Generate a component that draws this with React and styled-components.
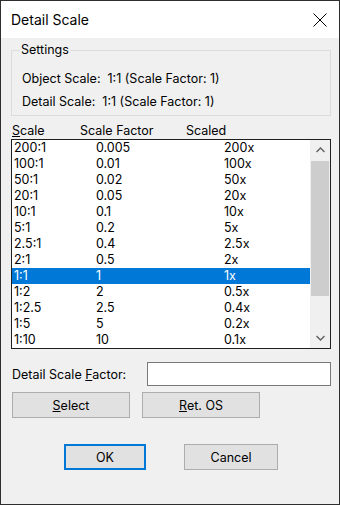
import React, { useState } from 'react';
import styled, { createGlobalStyle } from 'styled-components';

const GlobalStyle = createGlobalStyle`
  html, body {
    margin: 0;
    padding: 0;
    background: #f0f0f0;
  }
  body {
    font-family: Inter, 'Noto Sans', 'Liberation Sans', Arial, sans-serif;
    font-size: 12.5px;
    color: #000;
  }
`;

// Ventana del dialogo
const Window = styled.div`
  width: 340px;
  height: 505px;
  box-sizing: border-box;
  border: 1px solid #2e2e2e;
  background: #f0f0f0;
  display: flex;
  flex-direction: column;
`;

const TitleBar = styled.div`
  height: 37px;
  background: #fff;
  display: flex;
  align-items: center;
  justify-content: space-between;
  padding: 0 0 0 10px;
`;

const Title = styled.span`
  font-size: 14px;
  color: #000;
`;

const CloseButton = styled.div`
  width: 46px;
  height: 37px;
  display: flex;
  align-items: center;
  justify-content: center;
  margin-right: -4px;
`;

const Body = styled.div`
  display: flex;
  flex-direction: column;
  padding: 0 8px 0 10px;
`;

const GroupBox = styled.fieldset`
  margin: 4px 0 0 0;
  padding: 0 9px 5px 10px;
  border: 1px solid #dcdcdc;
  min-width: 0;
`;

const Legend = styled.legend`
  padding: 0 1px;
  margin-left: -2px;
  line-height: 16px;
`;

const InfoLine = styled.div`
  line-height: 16px;
  margin-top: ${(p) => p.$top}px;
  white-space: pre;
`;

const HeaderRow = styled.div`
  display: grid;
  grid-template-columns: 68px 106px 1fr;
  line-height: 16px;
  margin-top: 7px;
  padding-left: 1px;
`;

const U = styled.span`
  text-decoration: underline;
  text-underline-offset: 1px;
`;

const ListBox = styled.div`
  display: flex;
  height: 210px;
  box-sizing: border-box;
  border: 1px solid #1f1f1f;
  background: #fff;
  overflow: hidden;
`;

const Rows = styled.div`
  flex: 1;
  display: flex;
  flex-direction: column;
`;

const Row = styled.div`
  display: grid;
  grid-template-columns: 82px 128px 1fr;
  height: 16px;
  line-height: 16px;
  flex-shrink: 0;
  padding-left: 2px;
  background: ${(p) => (p.$selected ? '#0078d7' : 'transparent')};
  color: ${(p) => (p.$selected ? '#fff' : '#000')};
  cursor: default;
`;

const ScrollBar = styled.div`
  width: 20px;
  background: #f0f0f0;
  display: flex;
  flex-direction: column;
`;

const ArrowBox = styled.div`
  height: 20px;
  display: flex;
  align-items: center;
  justify-content: center;
`;

const Track = styled.div`
  flex: 1;
  display: flex;
  flex-direction: column;
`;

const Thumb = styled.div`
  height: 135px;
  margin: 1px 1px 0 1px;
  background: #cdcdcd;
`;

const FactorRow = styled.div`
  display: flex;
  align-items: center;
  justify-content: space-between;
  margin-top: 13px;
  padding-left: 1px;
`;

const TextInput = styled.input`
  width: 184px;
  height: 24px;
  box-sizing: border-box;
  border: 1px solid #7a7a7a;
  background: #fff;
  outline: none;
  font: inherit;
  padding: 0 4px;
`;

const ButtonRow = styled.div`
  display: flex;
  gap: ${(p) => p.$gap}px;
  margin-top: ${(p) => p.$top}px;
  padding-left: ${(p) => p.$left}px;
`;

const Button = styled.button`
  width: ${(p) => p.$w}px;
  height: 26px;
  box-sizing: border-box;
  background: #e1e1e1;
  border: ${(p) => (p.$default ? '2px solid #0078d7' : '1px solid #adadad')};
  font-family: inherit;
  font-size: 12.5px;
  color: #000;
  padding: 0;
  cursor: default;
`;

const scales = [
  ['200:1', '0.005', '200x'],
  ['100:1', '0.01', '100x'],
  ['50:1', '0.02', '50x'],
  ['20:1', '0.05', '20x'],
  ['10:1', '0.1', '10x'],
  ['5:1', '0.2', '5x'],
  ['2.5:1', '0.4', '2.5x'],
  ['2:1', '0.5', '2x'],
  ['1:1', '1', '1x'],
  ['1:2', '2', '0.5x'],
  ['1:2.5', '2.5', '0.4x'],
  ['1:5', '5', '0.2x'],
  ['1:10', '10', '0.1x'],
];

const Chevron = ({ up }) => (
  <svg width="9" height="6" viewBox="0 0 9 6">
    <polyline
      points={up ? '0.5,5 4.5,1 8.5,5' : '0.5,1 4.5,5 8.5,1'}
      fill="none"
      stroke="#606060"
      strokeWidth="1.4"
    />
  </svg>
);

const DetailScale = () => {
  const [selected, setSelected] = useState('1:1');
  const [factor, setFactor] = useState('');

  return (
    <>
      <GlobalStyle />
      <Window>
        <TitleBar>
          <Title>Detail Scale</Title>
          <CloseButton>
            <svg width="14" height="14" viewBox="0 0 14 14">
              <path d="M0.5 0.5 L13.5 13.5 M13.5 0.5 L0.5 13.5" stroke="#000" strokeWidth="1" />
            </svg>
          </CloseButton>
        </TitleBar>
        <Body>
          <GroupBox>
            <Legend>Settings</Legend>
            <InfoLine $top={13}>Object Scale:  1:1 (Scale Factor: 1)</InfoLine>
            <InfoLine $top={7}>Detail Scale:  1:1 (Scale Factor: 1)</InfoLine>
          </GroupBox>
          <HeaderRow>
            <span><U>S</U>cale</span>
            <span>Scale Factor</span>
            <span>Scaled</span>
          </HeaderRow>
          <ListBox>
            <Rows>
              {scales.map(([s, f, x]) => (
                <Row key={s} $selected={selected === s} onClick={() => setSelected(s)}>
                  <span>{s}</span>
                  <span>{f}</span>
                  <span>{x}</span>
                </Row>
              ))}
            </Rows>
            <ScrollBar>
              <ArrowBox><Chevron up /></ArrowBox>
              <Track><Thumb /></Track>
              <ArrowBox><Chevron /></ArrowBox>
            </ScrollBar>
          </ListBox>
          <FactorRow>
            <span>Detail Scale <U>F</U>actor:</span>
            <TextInput value={factor} onChange={(e) => setFactor(e.target.value)} />
          </FactorRow>
          <ButtonRow $gap={12} $top={6} $left={1}>
            <Button $w={118}><U>S</U>elect</Button>
            <Button $w={118}><U>R</U>et. OS</Button>
          </ButtonRow>
          <ButtonRow $gap={38} $top={26} $left={53}>
            <Button $w={82} $default>OK</Button>
            <Button $w={94}>Cancel</Button>
          </ButtonRow>
        </Body>
      </Window>
    </>
  );
};

export default DetailScale;
